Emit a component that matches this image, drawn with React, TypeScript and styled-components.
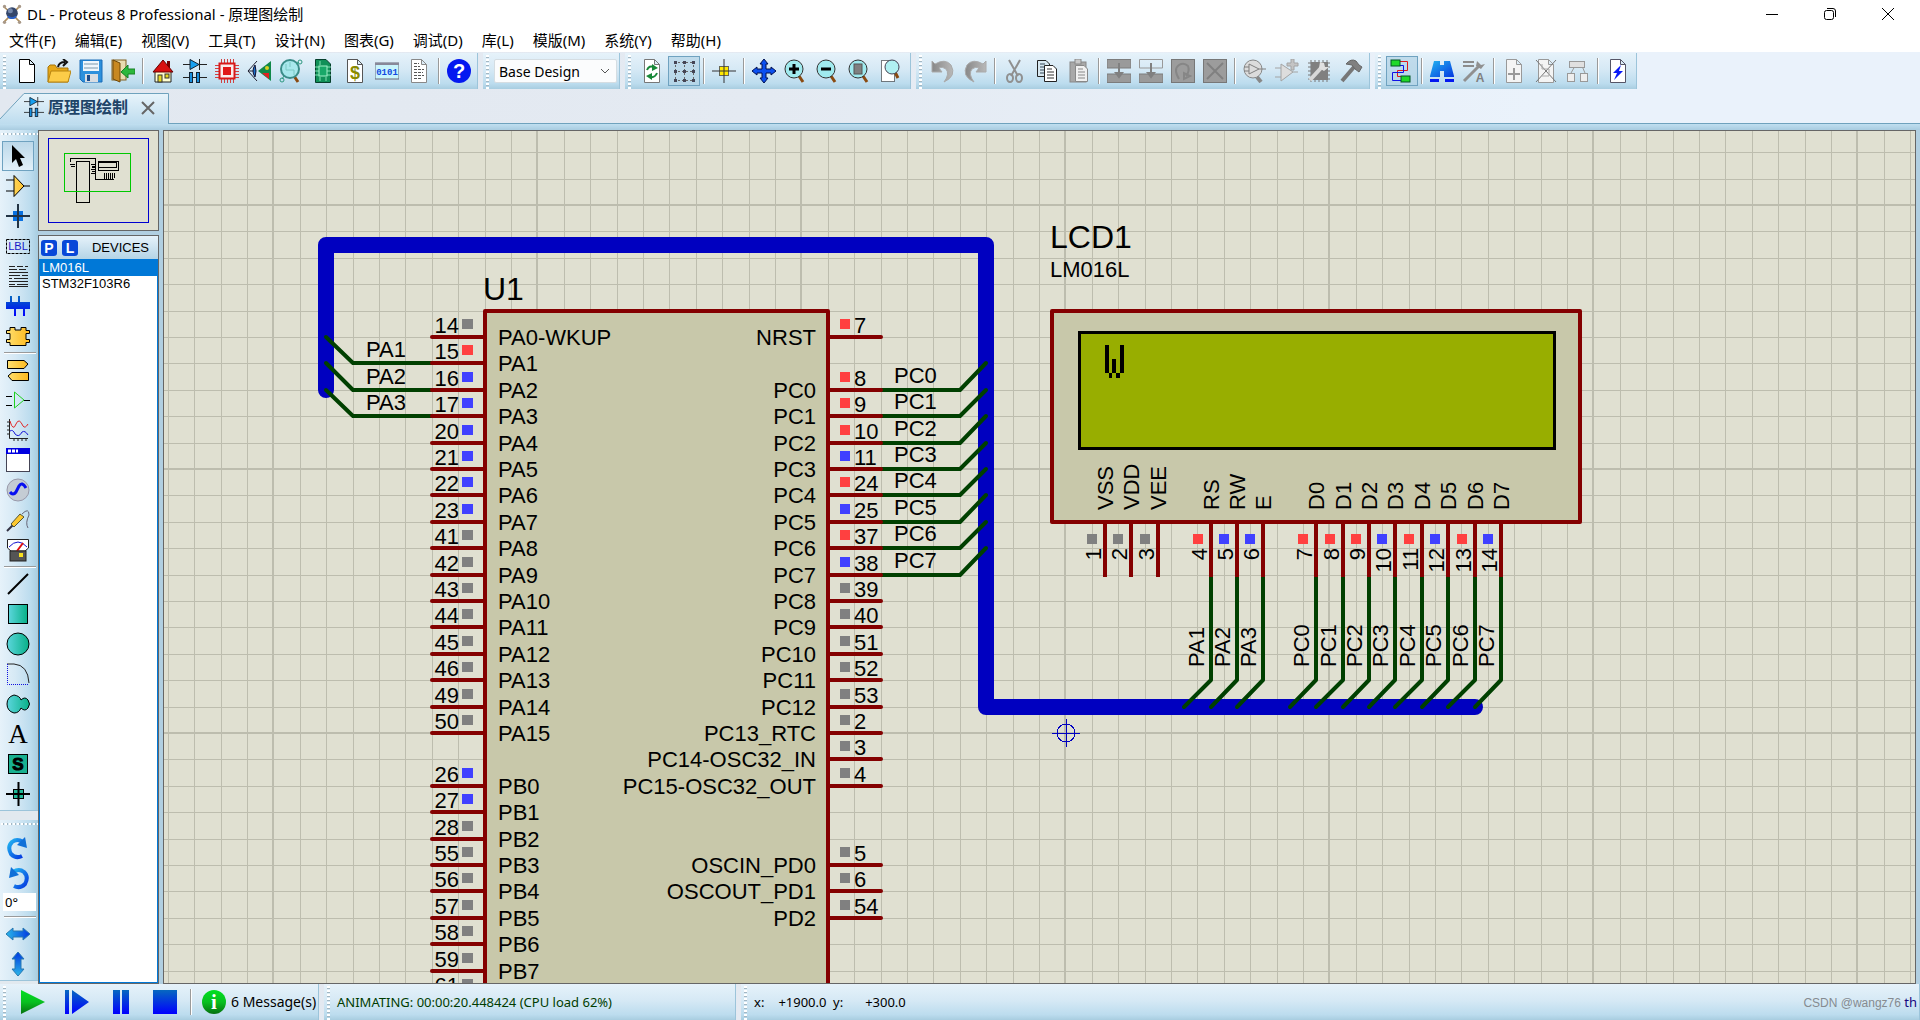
import React from "react";
import styled, { createGlobalStyle } from "styled-components";

const UI_FONT = `"Noto Sans", "Noto Sans CJK SC", sans-serif`;
const DRAW_FONT = `"Liberation Sans", Arial, sans-serif`;

const GlobalStyle = createGlobalStyle`
  * { box-sizing: border-box; }
  body { margin: 0; font-family: ${UI_FONT}; font-size: 14px; color: #000; }
  button { border: 0; padding: 0; margin: 0; background: none; color: inherit; font: inherit; }
  svg { display: block; }
`;

/* ---------- window frame ---------- */

const Window = styled.div`
  display: flex;
  flex-direction: column;
  height: 100vh;
  overflow: hidden;
  background: linear-gradient(to right, #e2e8f0, #e4eaf2 40%, #eaf2fb 80%);
`;

const TitleBar = styled.header`
  display: flex;
  align-items: center;
  height: 28px;
  padding-left: 2px;
  gap: 5px;
  background: #fff;
`;

const Title = styled.h1`
  flex: 1;
  margin: 0;
  font-size: 15px;
  font-weight: 400;
  line-height: 20px;
  white-space: nowrap;
`;

const WindowButton = styled.button`
  display: flex;
  align-items: center;
  justify-content: center;
  width: 58px;
  height: 28px;
`;

const WindowButtons = styled.div`
  display: flex;
  padding-right: 3px;
`;

const MenuBar = styled.nav`
  display: flex;
  align-items: center;
  gap: 19px;
  height: 24px;
  padding-left: 9px;
  background: #fff;
`;

const MenuItem = styled.button`
  font-size: 15px;
  line-height: 20px;
  white-space: nowrap;
`;

/* ---------- toolbars ---------- */

const ToolbarRow = styled.div`
  display: flex;
  gap: 5px;
  height: 37px;
  padding-top: 1px;
`;

const Toolbar = styled.div`
  display: flex;
  align-items: center;
  padding-right: 2px;
  border-right: 1px solid #9cc4da;
  background: linear-gradient(#e6f2fa, #d6e9f5 45%, #bcdcee 85%, #a8cde0);
`;

const Grip = styled.span<{ $row?: boolean }>`
  flex: none;
  ${(p) =>
    p.$row
      ? `align-self: stretch; height: 2px; margin: 0 0 0 1px;
         background: repeating-linear-gradient(to right, #fff 0 2px, #a3b7c3 2px 3px, transparent 3px 4px);`
      : `align-self: stretch; width: 3px; margin: 2px 5px 0 3px;
         background: repeating-linear-gradient(to bottom, #fff 0 2px, #a3b7c3 2px 3px, transparent 3px 4px);`}
`;

const ToolButton = styled.button<{ $on?: boolean }>`
  display: flex;
  align-items: center;
  justify-content: center;
  width: 32px;
  height: 30px;
  border: 1px solid ${(p) => (p.$on ? "#6fa2c0" : "transparent")};
  background: ${(p) => (p.$on ? "rgba(178, 211, 230, 0.7)" : "none")};
`;

const Divider = styled.span<{ $row?: boolean }>`
  flex: none;
  ${(p) =>
    p.$row
      ? `height: 2px; margin: 1px 2px 1px 4px; background: linear-gradient(#9a9a9a 50%, #fff 50%); align-self: stretch;`
      : `width: 2px; height: 26px; margin: 0 3px; background: linear-gradient(to right, #9a9a9a 50%, #fff 50%);`}
`;

const VariantBox = styled.div`
  position: relative;
  display: flex;
  align-items: center;
`;

const VariantSelect = styled.select`
  width: 123px;
  height: 24px;
  padding: 0 24px 0 4px;
  border: 1px solid #d5dde2;
  border-radius: 2px;
  background: #fbfcfd;
  appearance: none;
  color: #000;
  font-family: ${UI_FONT};
  font-size: 14px;
`;

const Chevron = styled.svg`
  position: absolute;
  right: 7px;
  pointer-events: none;
`;

/* ---------- tab strip ---------- */

const TabStrip = styled.div`
  display: flex;
  height: 35px;
  padding-top: 4px;
`;

const Tab = styled.div`
  position: relative;
  display: flex;
  align-items: center;
  width: 169px;
  height: 31px;
  padding: 0 0 3px 24px;
`;

const TabShape = styled.svg`
  position: absolute;
  inset: 0;
`;

const TabTitle = styled.button`
  position: relative;
  display: flex;
  align-items: center;
  gap: 4px;
  color: #1e4468;
  font-size: 16px;
  font-weight: 700;
  line-height: 20px;
`;

const TabClose = styled.button`
  position: relative;
  margin: 2px 0 0 12px;
`;

const TabRule = styled.div`
  flex: 1;
  border-bottom: 1px solid #6fa2bd;
`;

const Band = styled.div`
  height: 6px;
  background: linear-gradient(#c0dff0, #a9cce0);
`;

/* ---------- workspace ---------- */

const Workspace = styled.main`
  display: flex;
  flex: 1;
  min-height: 0;
  padding-right: 4px;
  background: #b1cfe1;
`;

const Palette = styled.div`
  display: flex;
  flex-direction: column;
  gap: 9px;
  width: 38px;
  background: #e2e9ef;
`;

const PaletteGroup = styled.div<{ $gap: number }>`
  display: flex;
  flex-direction: column;
  border-bottom: 1px solid #9cc4da;
  padding: 3px 0 1px;
  background: linear-gradient(to right, #e6f2fa, #d6e9f5 40%, #bcdcee 80%, #a8cde0);

  & > ${Grip} { margin-bottom: ${(p) => p.$gap}px; }
`;

const PaletteButton = styled.button<{ $on?: boolean }>`
  display: flex;
  align-items: center;
  justify-content: center;
  width: 32px;
  height: 30px;
  margin-left: 2px;
  border: 1px solid ${(p) => (p.$on ? "#6fa2c0" : "transparent")};
  background: ${(p) => (p.$on ? "linear-gradient(#bcd8e9, #e2f0f9)" : "none")};
`;

const AngleInput = styled.input`
  width: 33px;
  height: 18px;
  margin: 0 0 4px 3px;
  padding: 0 2px;
  border: 0;
  background: #fff;
  color: #000;
  font-family: ${UI_FONT};
  font-size: 13px;
`;

const SidePanel = styled.aside`
  display: flex;
  flex-direction: column;
  gap: 4px;
  width: 121px;
`;

const Overview = styled.div`
  height: 101px;
  border: 1px solid #666;
  background: #e0e0d1;
`;

const DeviceBox = styled.section`
  display: flex;
  flex: 1;
  flex-direction: column;
  border: 1px solid #666;
  background: #fff;
`;

const DeviceHeader = styled.div`
  display: flex;
  align-items: center;
  height: 23px;
  padding: 0 9px 0 2px;
  background: linear-gradient(#e6f2fa, #b4d4e6);
`;

const PickButton = styled.button`
  width: 16px;
  height: 16px;
  margin-right: 5px;
  border-radius: 3px;
  background: #0848d8;
  color: #fff;
  font-family: ${DRAW_FONT};
  font-size: 14px;
  font-weight: 700;
  line-height: 16px;
`;

const DeviceTitle = styled.h2`
  flex: 1;
  margin: 0;
  font-family: ${DRAW_FONT};
  font-size: 13px;
  font-weight: 400;
  line-height: 16px;
  text-align: right;
`;

const DeviceList = styled.ul`
  flex: 1;
  margin: 0;
  padding: 0;
  border: 1px solid #0078d7;
  list-style: none;
`;

const DeviceItem = styled.li<{ $on?: boolean }>`
  padding-left: 2px;
  background: ${(p) => (p.$on ? "#0078d7" : "none")};
  color: ${(p) => (p.$on ? "#fff" : "#000")};
  font-family: ${DRAW_FONT};
  font-size: 13px;
  line-height: 16px;
`;

const SheetFrame = styled.div`
  flex: 1;
  min-width: 0;
  margin-left: 4px;
  border: 1px solid #666;
  background: #e0e0d1;
  overflow: hidden;
`;

const Sheet = styled.svg`
  width: 100%;
  height: 100%;
  font-family: ${DRAW_FONT};
  font-size: 22px;
`;

/* ---------- status bar ---------- */

const StatusBar = styled.footer`
  display: flex;
  gap: 5px;
  height: 36px;
`;

const StatusPart = styled.div<{ $basis?: number }>`
  display: flex;
  align-items: center;
  ${(p) => (p.$basis ? `width: ${p.$basis}px;` : "flex: 1;")}
  border-right: 1px solid #9cc4da;
  background: linear-gradient(#e6f2fa, #d6e9f5 45%, #bcdcee 85%, #a8cde0);
  font-size: 13px;
  line-height: 18px;
  white-space: nowrap;
`;

const RunButton = styled.button`
  display: flex;
  align-items: center;
  justify-content: center;
  width: 44px;
  height: 30px;
`;

const Messages = styled.button`
  display: flex;
  align-items: center;
  gap: 5px;
  margin-left: 7px;
  font-size: 14px;
`;

const Progress = styled.output`
  padding-left: 2px;
  color: #003c00;
`;

const Coordinate = styled.span<{ $gap: number }>`
  display: flex;
  gap: ${(p) => p.$gap}px;
  width: 79px;
  padding-left: 2px;
`;

const Credit = styled.span`
  margin-left: auto;
  padding-right: 2px;
  color: #858b90;
  font-family: ${DRAW_FONT};
  font-size: 12px;
`;

const CreditTail = styled.span`
  color: #16067e;
  font-family: ${UI_FONT};
  font-size: 13px;
`;

/* ---------- icons ---------- */

type Pic = React.ReactNode;
const Icon = ({ children, size = 24 }: { children: Pic; size?: number }) => (
  <svg width={size} height={size} viewBox="0 0 24 24" aria-hidden="true">
    {children}
  </svg>
);

const Gradients = () => (
  <svg width="0" height="0" style={{ position: "absolute" }} aria-hidden="true">
    <defs>
      <linearGradient id="gold" x1="0" x2="1"><stop offset="0" stopColor="#ffe070" /><stop offset="1" stopColor="#fcb81c" /></linearGradient>
      <linearGradient id="teal" x1="0" x2="1"><stop offset="0" stopColor="#5cd6dc" /><stop offset="1" stopColor="#08b088" /></linearGradient>
      <linearGradient id="azure" x1="0" x2="1" y1="0" y2="1"><stop offset="0" stopColor="#22b4f0" /><stop offset="1" stopColor="#0438e0" /></linearGradient>
      <linearGradient id="azureH" x1="0" x2="1"><stop offset="0" stopColor="#2cb8e8" /><stop offset="1" stopColor="#0038e0" /></linearGradient>
      <linearGradient id="azureV" x1="0" x2="0" y1="1" y2="0"><stop offset="0" stopColor="#2cb8e8" /><stop offset="1" stopColor="#0038e0" /></linearGradient>
      <linearGradient id="deep" x1="0" x2="0" y1="0" y2="1"><stop offset="0" stopColor="#0668c0" /><stop offset="1" stopColor="#0000ff" /></linearGradient>
      <linearGradient id="go" x1="0" x2="0" y1="0" y2="1"><stop offset="0" stopColor="#00e020" /><stop offset="0.5" stopColor="#08c020" /><stop offset="1" stopColor="#067010" /></linearGradient>
      <linearGradient id="ash" x1="0" x2="1"><stop offset="0" stopColor="#888" /><stop offset="1" stopColor="#b8b8b8" /></linearGradient>
      <linearGradient id="tabFill" x1="0" x2="0" y1="0" y2="1"><stop offset="0" stopColor="#e8f4fb" /><stop offset="1" stopColor="#bddcee" /></linearGradient>
    </defs>
  </svg>
);

const page = (stroke = "#444", fill = "#fff") => (
  <path d="M4.500.500H14.500L19.500 5.500V23.500H4.500ZM14.500.500V5.500H19.500" fill={fill} stroke={stroke} />
);
const lens = (
  <>
    <path d="M15 17l4 6" stroke="#8a4a10" strokeWidth="3" />
    <circle cx="10" cy="10" r="9" fill="#a0eaee" stroke="#333" />
  </>
);
const diodeCap = (
  <>
    <path d="M0 5.500H24M0 18.500H24M16.500 0V11" stroke="#222" />
    <path d="M7 0.500L16 5.500L7 10.500Z" fill="#18a0f0" stroke="#123" />
    <rect x="6.500" y="13.500" width="3" height="10" fill="#1890e0" stroke="#123" />
    <rect x="13.500" y="13.500" width="3" height="10" fill="#1890e0" stroke="#123" />
  </>
);

const pics: Record<string, Pic> = {
  logo: (
    <>
      <path d="M2 3Q12 12 22 22M22 2Q12 12 2 22" stroke="#b09060" strokeWidth="2" fill="none" />
      <circle cx="12" cy="11" r="7" fill="#34466a" />
      <circle cx="10" cy="8" r="3" fill="#7488ac" />
      <path d="M7 15Q12 19 17 15" stroke="#2a60c8" strokeWidth="2" fill="none" />
      <circle cx="3" cy="3" r="2" fill="#a89888" /><circle cx="21" cy="3" r="2" fill="#a89888" />
      <circle cx="3" cy="22" r="2" fill="#a89888" /><circle cx="21" cy="22" r="2" fill="#a89888" />
    </>
  ),
  fresh: page("#000"),
  open: (
    <>
      <path d="M1 23V8L3 6H8L10 9H21V23Z" fill="#e6a818" stroke="#a87408" />
      <path d="M1 23L4 12H24L21 23Z" fill="#fccc48" stroke="#b88410" />
      <path d="M11 8Q12 3 18 3M16 0L20 3L16 7" fill="none" stroke="#111" strokeWidth="2" />
    </>
  ),
  save: (
    <>
      <path d="M1 1H23V23H4L1 20Z" fill="#2c90dc" stroke="#1a6cb8" />
      <rect x="4" y="2" width="16" height="10" fill="#eef6fc" />
      <path d="M5 5H19M5 9H19" stroke="#7a98ac" />
      <rect x="6" y="15" width="13" height="8" fill="#d8dde2" /><rect x="8" y="16" width="3" height="6" fill="#1c4c8c" />
    </>
  ),
  exit: (
    <>
      <rect x="1" y="1" width="14" height="20" fill="#e8dcb0" stroke="#806020" />
      <path d="M2 1L9 4V23L2 20Z" fill="#c88820" stroke="#704808" />
      <path d="M10 13L17 6V10H24V15H17V19Z" fill="#2cb83c" stroke="#188024" />
    </>
  ),
  home: (
    <>
      <path d="M16 2H19V9H16Z" fill="#700" />
      <path d="M4 11H20V23H4Z" fill="#ffffd0" stroke="#222" />
      <path d="M2 13L12 1L22 13Z" fill="#d81010" stroke="#600" />
      <rect x="7" y="16" width="4" height="7" fill="#e8d820" stroke="#333" /><rect x="14" y="15" width="4" height="4" fill="#e8d820" stroke="#333" />
    </>
  ),
  schematic: diodeCap,
  chip: (
    <>
      <path d="M6.500 0V24M9.500 0V24M12.500 0V24M15.500 0V24M18.500 0V24M0 6.500H24M0 9.500H24M0 12.500H24M0 15.500H24M0 18.500H24" stroke="#d04040" />
      <rect x="4.500" y="4.500" width="15" height="15" fill="#fbecec" stroke="#d81818" strokeWidth="2" /><rect x="8" y="8" width="8" height="8" fill="#e01818" />
    </>
  ),
  viewer: (
    <>
      <path d="M10 2L1 12L10 22M1 12H9" fill="none" stroke="#223" />
      <path d="M8 6Q4 12 8 18Q10 12 8 6" fill="#1c70c8" stroke="#113" />
      <path d="M11 12L24 2V22Z" fill="#108848" /><path d="M15 14L22 20V14Z" fill="#e02020" /><circle cx="20" cy="9" r="2" fill="#d8d020" />
    </>
  ),
  gerber: (
    <>
      <path d="M15 17L19 23" stroke="#8a4a10" strokeWidth="3" />
      <circle cx="11" cy="10" r="9" fill="#a8e8ec" stroke="#3a8c88" strokeWidth="2" />
      <path d="M7 5V11H15V16M11 3V8" stroke="#7cc8c4" fill="none" />
      <path d="M17 5L20 3M5 17L3 20" stroke="#2c9880" fill="none" />
      <circle cx="21" cy="3" r="2" fill="none" stroke="#2c9880" /><circle cx="3" cy="21" r="2" fill="none" stroke="#2c9880" />
    </>
  ),
  board: (
    <>
      <path d="M4.500.500H15L19.500 5V23.500H4.500Z" fill="#109058" stroke="#06402c" />
      <path d="M4 8H8M4 12H8M4 16H8M16 8H20M16 12H20M16 16H20M9 6V2M15 18V22M9 18V22" stroke="#80e0b0" />
      <rect x="8" y="7" width="8" height="10" fill="#18a868" stroke="#a0f0c8" />
    </>
  ),
  bill: (
    <>
      {page("#555")}
      <text x="12" y="20" textAnchor="middle" fontSize="18" fontWeight="700" fill="#8a8a00" fontFamily="Liberation Sans, sans-serif">$</text>
    </>
  ),
  source: (
    <>
      <rect x="0" y="4" width="24" height="16" fill="#c8f4fc" stroke="#667" />
      <path d="M0 5H24" stroke="#889" strokeWidth="2" />
      <text x="12" y="16" textAnchor="middle" fontSize="9" fontWeight="700" fill="#1048e0" fontFamily="Liberation Mono, monospace">0101</text>
    </>
  ),
  notes: (
    <>
      {page("#888")}
      <path d="M7 4.500H12M7 7.500H13M7 10.500H17M7 13.500H16M7 16.500H17M7 19.500H14" stroke="#555" strokeDasharray="3 1" />
    </>
  ),
  help: (
    <>
      <circle cx="12" cy="12" r="12" fill="#0418f0" />
      <text x="12" y="19" textAnchor="middle" fontSize="20" fontWeight="700" fill="#fff" fontFamily="Liberation Sans, sans-serif">?</text>
    </>
  ),
  redraw: (
    <>
      {page("#777")}
      <path d="M7 11Q9 6 14 8" fill="none" stroke="#188838" strokeWidth="2" /><path d="M12 5L18 9L12 12Z" fill="#188838" />
      <path d="M17 14Q15 19 10 18" fill="none" stroke="#188838" strokeWidth="2" /><path d="M12 14L6 17L12 21Z" fill="#188838" />
    </>
  ),
  dots: (
    <>
      <path d="M2 3.500H22M2 12.500H22M2 21.500H22M3.500 2V22M12.500 2V22M21.500 2V22" stroke="#666" strokeDasharray="2 2" />
      {[3, 12, 21].map((x) => [3, 12, 21].map((y) => <rect key={`${x}-${y}`} x={x - 1} y={y - 1} width="3" height="3" fill="#445" />))}
    </>
  ),
  origin: (
    <>
      <rect x="7.500" y="7.500" width="9" height="9" fill="#ffe800" stroke="#665" />
      <path d="M0 12H24M12 0V24" stroke="#333" />
    </>
  ),
  pan: (
    <path d="M12 0L16 5H14V10H19V8L24 12L19 16V14H14V19H16L12 24L8 19H10V14H5V16L0 12L5 8V10H10V5H8Z" fill="#0c50f0" stroke="#001050" />
  ),
  zoomIn: <>{lens}<path d="M10 5V15M5 10H15" stroke="#000" strokeWidth="3" /></>,
  zoomOut: <>{lens}<path d="M5 10H15" stroke="#000" strokeWidth="3" /></>,
  zoomAll: <>{lens}<rect x="6" y="5" width="8" height="10" fill="#808080" stroke="#555" /></>,
  zoomArea: (
    <>
      <path d="M1.500 1.500H14.500V22.500H1.500Z" fill="#fff" stroke="#000" strokeDasharray="1 1" />
      <path d="M15 13L18 19" stroke="#8a4a10" strokeWidth="3" /><circle cx="12" cy="8" r="7" fill="#b0f0f2" stroke="#445" />
    </>
  ),
  undo: <path d="M1 2L4 5Q14 -1 20 6Q26 17 13 23Q19 15 15 10Q11 7 8 9L11 13L1 13Z" fill="url(#ash)" stroke="#aaa" />,
  redo: <path d="M23 2L20 5Q10 -1 4 6Q-2 17 11 23Q5 15 9 10Q13 7 16 9L13 13L23 13Z" fill="url(#ash)" stroke="#aaa" />,
  cut: (
    <>
      <path d="M6 1L15 17M17 1L8 17" stroke="#909090" strokeWidth="2" />
      <ellipse cx="7" cy="19" rx="3" ry="4" fill="none" stroke="#909090" strokeWidth="2" /><ellipse cx="16" cy="19" rx="3" ry="4" fill="none" stroke="#909090" strokeWidth="2" />
    </>
  ),
  copy: (
    <>
      <path d="M2.500 1.500H11L14.500 5V17.500H2.500Z" fill="#d8e8f0" stroke="#222" /><path d="M5 5H10M5 8H12M5 11H12M5 14H12" stroke="#345" />
      <path d="M9.500 6.500H18L21.500 10V22.500H9.500Z" fill="#fff" stroke="#222" /><path d="M12 10H17M12 13H19M12 16H19M12 19H19" stroke="#333" />
    </>
  ),
  paste: (
    <>
      <rect x="3" y="3" width="16" height="20" fill="#a8a8a8" stroke="#888" /><rect x="8" y="0" width="6" height="5" fill="#c8c8c8" stroke="#888" />
      <path d="M8.500 6.500H17L20.500 10V22.500H8.500Z" fill="#f0f0f0" stroke="#888" /><path d="M11 10H16M11 13H18M11 16H18M11 19H18" stroke="#888" />
    </>
  ),
  blockCopy: (
    <>
      <path d="M0 .500H24V9H0ZM0 15H24V23.500H0Z" fill="#9a9a9a" stroke="#7c7c7c" />
      <path d="M12 4V16M9 14L12 18L15 14Z" fill="#808080" stroke="#808080" strokeWidth="2" />
    </>
  ),
  blockMove: (
    <>
      <path d="M.500.500H23.500V9H.500Z" fill="none" stroke="#999" /><path d="M0 15H24V23.500H0Z" fill="#9a9a9a" stroke="#7c7c7c" />
      <path d="M12 4V16M9 14L12 18L15 14Z" fill="#808080" stroke="#808080" strokeWidth="2" />
    </>
  ),
  blockRotate: (
    <>
      <rect x=".500" y=".500" width="23" height="23" fill="#9c9c9c" stroke="#777" />
      <path d="M8 20Q2 10 8 6Q13 3 17 7Q19 12 15 17M13 14V20L19 17Z" fill="none" stroke="#868686" strokeWidth="2" />
    </>
  ),
  blockDelete: (
    <>
      <rect x=".500" y=".500" width="23" height="23" fill="#9c9c9c" stroke="#777" />
      <path d="M4 4L20 20M20 4L4 20" stroke="#808080" strokeWidth="2" />
    </>
  ),
  pick: (
    <>
      <path d="M14 18L18 23" stroke="#888" strokeWidth="4" />
      <circle cx="10" cy="10" r="9" fill="#dcdcdc" stroke="#888" /><path d="M6 5L16 10L6 15ZM1 8H6M1 12H6M16 10H23" fill="none" stroke="#808080" />
    </>
  ),
  makeDevice: (
    <>
      <path d="M6 5L18 13L6 22ZM0 9H6M0 18H6M18 13H23" fill="#ddd" stroke="#a4a4a4" />
      <path d="M16 0H19V4H23V7H19V11H16V7H12V4H16Z" fill="#c4c4c4" stroke="#a4a4a4" />
    </>
  ),
  packaging: (
    <>
      <path d="M4 1V23M8 1V23M12 1V23M16 1V23M20 1V23M1 4H23M1 8H23M1 12H23M1 16H23M1 20H23" stroke="#777" />
      <rect x="4" y="3" width="17" height="18" fill="#808080" /><path d="M3 21L14 9" stroke="#d8d8d8" strokeWidth="4" /><path d="M13 3L12 9L17 12L22 8L18 8L17 4Z" fill="#e0e0e0" />
    </>
  ),
  decompose: (
    <>
      <path d="M3 22L15 8" stroke="#777" strokeWidth="4" /><path d="M7 5Q12 -1 17 2L20 6L23 8L20 13L16 10L13 6Z" fill="#808080" stroke="#666" />
    </>
  ),
  wireAuto: (
    <>
      <path d="M10 2.500H17.500V11.500H7.500V17.500H12" fill="none" stroke="#e01818" /><path d="M10 6.500H13.500V13.500H2.500V21.500H12" fill="none" stroke="#1010e8" />
      <rect x="1" y="1" width="9" height="6" fill="#20d828" stroke="#052" /><rect x="11" y="17" width="9" height="6" fill="#20d828" stroke="#052" />
    </>
  ),
  find: (
    <>
      <path d="M4 2H10V6H14V2H20L24 17V18H14V12H10V18H0V17Z" fill="url(#azure)" />
      <path d="M0 20H9V23H0ZM15 20H24V23H15Z" fill="#0418f0" />
    </>
  ),
  assign: (
    <>
      <path d="M1 3H12M1 7H12" stroke="#8c8c8c" strokeWidth="2" /><path d="M2 22L18 6" stroke="#909090" strokeWidth="3" /><path d="M15 2L14 7L19 10L23 5L19 6Z" fill="#909090" />
      <text x="18" y="23" textAnchor="middle" fontSize="12" fontWeight="700" fill="#808080" fontFamily="Liberation Sans, sans-serif">A</text>
    </>
  ),
  sheetNew: <>{page("#999", "#f4f4f4")}<path d="M12 9V21M6 15H18" stroke="#999" strokeWidth="2" /></>,
  sheetDrop: <>{page("#999", "#f4f4f4")}<path d="M2 1L22 23M22 1L2 23" stroke="#777" /><path d="M8 5V10H15V17H8" stroke="#aaa" fill="none" /></>,
  sheetTree: (
    <>
      <path d="M5 14L9 7M19 14L16 7" stroke="#999" />
      <rect x="3.500" y="2.500" width="15" height="6" fill="#e0e0e0" stroke="#999" /><rect x="1.500" y="14.500" width="7" height="8" fill="#eee" stroke="#999" /><rect x="14.500" y="14.500" width="7" height="8" fill="#eee" stroke="#999" />
    </>
  ),
  erc: <>{page("#556")}<path d="M15 6L7 14H11L8 21L17 12H13Z" fill="#0818f8" /></>,

  arrow: <path d="M6 1V19L10 15L13 23L17 21L14 14H19Z" fill="#000" />,
  component: <path d="M0 6H8M0 17H8M18 12H24M8 1.500V22.500L18 12Z" fill="url(#gold)" stroke="#000" />,
  junction: <><rect x="7" y="7" width="10" height="10" fill="#0870e0" /><path d="M12 0V24M0 12H24" stroke="#234" strokeWidth="2" /></>,
  label: (
    <>
      <rect x=".500" y="5.500" width="23" height="14" fill="none" stroke="#000" strokeDasharray="3 1" />
      <text x="12" y="16" textAnchor="middle" fontSize="11" fill="#1818c8" fontFamily="Liberation Sans, sans-serif">LBL</text>
    </>
  ),
  script: (
    <>
      <path d="M3 2.500H9M11 2.500H17M19 2.500H22M3 8.500H22M3 11.500H14M16 11.500H22M3 14.500H6M8 14.500H22" stroke="#222" />
      <path d="M3 17.500H22M3 20.500H9M11 20.500H22M3 5.500H11M13 5.500H20M3 22.500H22" stroke="#222" />
    </>
  ),
  bus: <path d="M0 8H4V2H6V8H12V2H14V8H24V15H19V22H17V15H10V22H8V15H0Z" fill="url(#deep)" />,
  subcircuit: <path d="M4 3.500H9V6H15V3.500H20V6.500H23.500V9.500H20V15.500H23.500V18.500H20V21.500H4V18.500H.500V15.500H4V9.500H.500V6.500H4Z" fill="url(#gold)" stroke="#000" />,
  terminal: <path d="M1.500 2.500H18L22 6L18 10.500H1.500ZM22.500 14.500H6L2 18L6 22.500H22.500Z" fill="url(#gold)" stroke="#000" />,
  devicePin: <><path d="M0 8.500H6M0 17.500H6M18 12.500H24" stroke="#000" /><path d="M8.500 4V20L18 12Z" fill="none" stroke="#20d020" /></>,
  graph: (
    <>
      <path d="M3.500 1V20.500H22M1 4H4M1 8H4M1 12H4M1 16H4M8 20V23M12 20V23M16 20V23M20 20V23" stroke="#222" fill="none" />
      <path d="M4 3Q7 14 10 6Q13 -1 17 8Q19 11 22 6" stroke="#e02828" fill="none" /><path d="M4 13Q7 11 9 16Q13 20 16 14Q19 12 22 17" stroke="#1818d8" fill="none" />
    </>
  ),
  popup: <><rect x=".500" y=".500" width="23" height="23" fill="#fff" stroke="#445" /><rect x="0" y="0" width="24" height="6" fill="#0000e0" /><path d="M2 3H12" stroke="#fff" strokeWidth="3" strokeDasharray="3 1" /></>,
  generator: <><circle cx="12" cy="12" r="11" fill="#c4ccd4" stroke="#99a" /><path d="M4 14Q7 18 10 14L13 8Q16 3 20 10" fill="none" stroke="#0810f0" strokeWidth="3" /></>,
  probe: <><path d="M1 23L7 17" stroke="#334" strokeWidth="2" /><path d="M5 16L14 6L18 9L8 19Z" fill="#fcc830" stroke="#553" /><path d="M16 6Q23 -1 23 7Q19 15 22 20" fill="none" stroke="#667" /></>,
  meter: (
    <>
      <path d="M1.500 1.500H22.500V10L19 13H5L1.500 10Z" fill="#fff" stroke="#222" /><path d="M3 9Q12 -1 21 9" stroke="#1010d0" fill="none" /><path d="M11 13L17 5" stroke="#e01010" strokeWidth="2" />
      <rect x="4" y="13" width="16" height="10" fill="#555" stroke="#222" /><rect x="13" y="15" width="4" height="4" fill="#f8e020" />
    </>
  ),
  line: <path d="M2 22L22 2" stroke="#000" strokeWidth="2" />,
  box: <rect x="2.500" y="2.500" width="19" height="19" fill="url(#teal)" stroke="#000" />,
  circle: <circle cx="12" cy="12" r="11" fill="url(#teal)" stroke="#000" />,
  arc: <><path d="M1 2H8Q22 3 23 21" fill="none" stroke="#222" /><path d="M1.500 2V22.500H23" fill="none" stroke="#1010e0" strokeDasharray="1 1" /></>,
  path: <path d="M8 3Q14 4 15 8Q19 4 22 8Q25 12 22 16Q19 20 15 16Q13 21 8 21Q1 19 1 12Q1 5 8 3Z" fill="url(#teal)" stroke="#000" />,
  text: <text x="12" y="21" textAnchor="middle" fontSize="27" fill="#000" fontFamily="Liberation Serif, serif">A</text>,
  symbol: (
    <>
      <rect x="2.500" y="2.500" width="19" height="19" fill="#18b090" stroke="#000" />
      <text x="12" y="18" textAnchor="middle" fontSize="17" fontWeight="700" stroke="#000" fill="#000" fontFamily="Liberation Sans, sans-serif">S</text>
    </>
  ),
  marker: <><rect x="7.500" y="7.500" width="10" height="9" fill="#20b898" stroke="#000" /><path d="M12.500 0V24M0 12H24" stroke="#000" strokeWidth="2" /></>,
  rotateCw: <><path d="M16 20Q10 23 5 18Q1 11 6 6Q11 2 17 6" fill="none" stroke="url(#azure)" strokeWidth="4" /><path d="M19 1L21 12L11 9Z" fill="#1070d8" /></>,
  rotateCcw: <><path d="M8 20Q14 23 19 18Q23 11 18 6Q13 2 7 6" fill="none" stroke="url(#azure)" strokeWidth="4" /><path d="M5 1L3 12L13 9Z" fill="#1070d8" /></>,
  flipX: <path d="M0 12L7 6V9H17V6L24 12L17 18V15H7V18Z" fill="url(#azureH)" stroke="#2878b0" />,
  flipY: <path d="M12 0L18 7H15V17H18L12 24L6 17H9V7H6Z" fill="url(#azureV)" stroke="#2878b0" />,
  play: <path d="M0 0L24 12L0 24Z" fill="url(#go)" />,
  step: <path d="M0 0H4V24H0ZM7 0L24 12L7 24Z" fill="url(#deep)" />,
  pause: <path d="M4 0H11V24H4ZM13 0H20V24H13Z" fill="url(#deep)" />,
  stop: <rect width="24" height="24" fill="url(#deep)" />,
  info: (
    <>
      <circle cx="12" cy="12" r="12" fill="url(#go)" />
      <text x="12" y="19" textAnchor="middle" fontSize="21" fontWeight="700" fill="#fff" fontFamily="Liberation Serif, serif">i</text>
    </>
  ),
};

/* ---------- schematic ---------- */

// One grid square is 132/5 px; positions snap to whole pixels.
const gx = (n: number) => Math.ceil((n * 132) / 5);
const gy = (n: number) => Math.round((n * 132) / 5);

const range = (from: number, to: number) => Array.from({ length: to - from + 1 }, (_, i) => from + i);

const BODY = "#c8c8aa";
const OUTLINE = "#840000";
const WIRE = "#004000";
const BUS = "#0000c0";
const LEVEL: Record<string, string> = { r: "#ff4040", b: "#4040ff", g: "#808080" };

type Pin = [row: number, num: string, level: string, name: string];

const leftPins: Pin[] = [
  [-15, "14", "g", "PA0-WKUP"], [-14, "15", "r", "PA1"], [-13, "16", "b", "PA2"], [-12, "17", "b", "PA3"],
  [-11, "20", "b", "PA4"], [-10, "21", "b", "PA5"], [-9, "22", "b", "PA6"], [-8, "23", "b", "PA7"],
  [-7, "41", "g", "PA8"], [-6, "42", "g", "PA9"], [-5, "43", "g", "PA10"], [-4, "44", "g", "PA11"],
  [-3, "45", "g", "PA12"], [-2, "46", "g", "PA13"], [-1, "49", "g", "PA14"], [0, "50", "g", "PA15"],
  [2, "26", "b", "PB0"], [3, "27", "b", "PB1"], [4, "28", "g", "PB2"], [5, "55", "g", "PB3"],
  [6, "56", "g", "PB4"], [7, "57", "g", "PB5"], [8, "58", "g", "PB6"], [9, "59", "g", "PB7"], [10, "61", "g", ""],
];

const rightPins: Pin[] = [
  [-15, "7", "r", "NRST"], [-13, "8", "r", "PC0"], [-12, "9", "r", "PC1"], [-11, "10", "r", "PC2"],
  [-10, "11", "b", "PC3"], [-9, "24", "r", "PC4"], [-8, "25", "b", "PC5"], [-7, "37", "r", "PC6"],
  [-6, "38", "b", "PC7"], [-5, "39", "g", "PC8"], [-4, "40", "g", "PC9"], [-3, "51", "g", "PC10"],
  [-2, "52", "g", "PC11"], [-1, "53", "g", "PC12"], [0, "2", "g", "PC13_RTC"], [1, "3", "g", "PC14-OSC32_IN"],
  [2, "4", "g", "PC15-OSC32_OUT"], [5, "5", "g", "OSCIN_PD0"], [6, "6", "g", "OSCOUT_PD1"], [7, "54", "g", "PD2"],
];

type LcdPin = [col: number, num: string, level: string, name: string, net?: string];

const lcdPins: LcdPin[] = [
  [1.5, "1", "g", "VSS"], [2.5, "2", "g", "VDD"], [3.5, "3", "g", "VEE"],
  [5.5, "4", "r", "RS", "PA1"], [6.5, "5", "b", "RW", "PA2"], [7.5, "6", "b", "E", "PA3"],
  [9.5, "7", "r", "D0", "PC0"], [10.5, "8", "r", "D1", "PC1"], [11.5, "9", "r", "D2", "PC2"], [12.5, "10", "b", "D3", "PC3"],
  [13.5, "11", "r", "D4", "PC4"], [14.5, "12", "b", "D5", "PC5"], [15.5, "13", "r", "D6", "PC6"], [16.5, "14", "b", "D7", "PC7"],
];

const Grid = () => (
  <g fill="#bdbdae">
    {range(-34, 110).map((n) => (
      <rect key={`v${n}`} x={n % 10 ? gx(n) : gx(n) - 1} y={-602} width={n % 10 ? 1 : 2} height={2400} />
    ))}
    {range(-22, 60).map((n) => (
      <rect key={`h${n}`} x={-901} y={n % 10 ? gy(n) : gy(n) - 1} width={4000} height={n % 10 ? 1 : 2} />
    ))}
  </g>
);

const UpText = ({ x, y, end, children }: { x: number; y: number; end?: boolean; children: string }) => (
  <text transform={`translate(${x} ${y}) rotate(-90)`} textAnchor={end ? "end" : "start"}>{children}</text>
);

const Controller = () => {
  const left = gx(-22);
  const right = gx(-9);
  return (
    <g>
      <rect x={left} y={gy(-16)} width={right - left} height={gy(14) - gy(-16)} fill={BODY} stroke={OUTLINE} strokeWidth="4" strokeLinejoin="round" />
      <text x={left - 2} y={gy(-16) - 11} fontSize="32">U1</text>
      {leftPins.map(([row, num, level, name]) => (
        <g key={num}>
          <path d={`M${gx(-24)} ${gy(row)}H${left}`} stroke={OUTLINE} strokeWidth="4" strokeLinecap="round" />
          <rect x={left - 23} y={gy(row) - 18} width="11" height="10" fill={LEVEL[level]} />
          <text x={left - 26} y={gy(row) - 4} textAnchor="end">{num}</text>
          {name && <text x={left + 13} y={gy(row) + 8}>{name}</text>}
        </g>
      ))}
      {rightPins.map(([row, num, level, name]) => (
        <g key={num}>
          <path d={`M${gx(-7)} ${gy(row)}H${right}`} stroke={OUTLINE} strokeWidth="4" strokeLinecap="round" />
          <rect x={right + 12} y={gy(row) - 18} width="10" height="10" fill={LEVEL[level]} />
          <text x={right + 26} y={gy(row) - 4}>{num}</text>
          <text x={right - 12} y={gy(row) + 8} textAnchor="end">{name}</text>
        </g>
      ))}
    </g>
  );
};

const Display = () => {
  const left = gx(-0.5);
  const top = gy(-16);
  const bottom = gy(-8);
  // Lit dots of the 5x7 character cell, as [x, y, width, height].
  const dots = [[0, 0, 4, 28], [15, 0, 4, 28], [7, 14, 4, 14], [4, 28, 3, 5], [11, 28, 4, 5]];
  return (
    <g>
      <rect x={left} y={top} width={gx(19.5) - left} height={bottom - top} fill={BODY} stroke={OUTLINE} strokeWidth="4" strokeLinejoin="round" />
      <rect x={left + 26} y={top + 20} width="478" height="119" fill="#000" />
      <rect x={left + 29} y={top + 23} width="472" height="113" fill="#98ae00" />
      <g transform={`translate(${left + 53} ${top + 34})`}>
        {dots.map(([x, y, w, h]) => <rect key={`${x}-${y}`} x={x} y={y} width={w} height={h} />)}
      </g>
      <text x={left - 2} y={top - 63} fontSize="32">LCD1</text>
      <text x={left - 2} y={top - 34}>LM016L</text>
      {lcdPins.map(([col, num, level, name, net]) => {
        const x = gx(col);
        return (
          <g key={num}>
            {net && (
              <path d={`M${x} ${gy(-6)}V${gy(-2)}L${gx(col - 1)} ${gy(-1)}`} fill="none" stroke={WIRE} strokeWidth="4" strokeLinecap="round" strokeLinejoin="round" />
            )}
            <path d={`M${x} ${bottom}V${gy(-6) + 2}`} stroke={OUTLINE} strokeWidth="4" />
            <rect x={x - 18} y={bottom + 12} width="10" height="10" fill={LEVEL[level]} />
            <UpText x={x + 8} y={bottom - 12}>{name}</UpText>
            <UpText x={x - 4} y={gy(-7)} end>{num}</UpText>
            {net && <UpText x={x - 7} y={gy(-2) - 13}>{net}</UpText>}
          </g>
        );
      })}
    </g>
  );
};

const Wiring = () => (
  <g fill="none" stroke={WIRE} strokeWidth="4" strokeLinecap="round" strokeLinejoin="round">
    {[1, 2, 3].map((n) => {
      const row = n - 15;
      return (
        <g key={n}>
          <path d={`M${gx(-24)} ${gy(row)}H${gx(-27)}L${gx(-28)} ${gy(row - 1)}`} />
          <text x={gx(-27) + 13} y={gy(row) - 6} fill="#000" stroke="none">{`PA${n}`}</text>
        </g>
      );
    })}
    {range(0, 7).map((n) => {
      const row = n - 13;
      return (
        <g key={n}>
          <path d={`M${gx(-7)} ${gy(row)}H${gx(-4)}L${gx(-3)} ${gy(row - 1)}`} />
          <text x={gx(-7) + 13} y={gy(row) - 7} fill="#000" stroke="none">{`PC${n}`}</text>
        </g>
      );
    })}
  </g>
);

const Schematic = () => (
  <Sheet role="img" aria-label="LCD1 U1">
    <g transform="translate(901 602)">
      <Grid />
      <path
        d={`M${gx(-28)} ${gy(-13)}V${gy(-18.5)}H${gx(-3)}V${gy(-1)}H${gx(15.5)}`}
        fill="none" stroke={BUS} strokeWidth="16" strokeLinecap="round" strokeLinejoin="round"
      />
      <Wiring />
      <Controller />
      <Display />
      <path d="M-13 0H15M1 -14V14M10 0A9 9 0 1 1 -8 0A9 9 0 1 1 10 0" fill="none" stroke={BUS} shapeRendering="crispEdges" />
    </g>
  </Sheet>
);

const Thumbnail = () => (
  <svg width="119" height="99" viewBox="0 0 119 99" shapeRendering="crispEdges" fill="none" stroke="#000" aria-hidden="true">
    <path d="M9.500 7.500H109.500V91.500H9.500Z" stroke="#0000d0" />
    <path d="M31.500 31V27.500H56.500V48.500H75M31 33.500H36M32 35.500H36" />
    <path d="M37.500 30.500H50.500V71.500H37.500Z" />
    <path d="M59.500 30.500H79.500V39.500H59.500ZM59.500 31.500H77.500V36.500H59.500Z" />
    <path d="M52 33.500H56M53 35.500H56M53 36.500H56M52 38.500H56M53 40.500H56M52 42.500H56" />
    <path d="M65.500 42V48M67.500 42V48M69.500 42V48M71.500 42V48M73.500 42V48M75.500 42V47" />
    <path d="M25.500 22.500H91.500V60.500H25.500Z" stroke="#00c800" />
  </svg>
);

/* ---------- application ---------- */

const menus = ["文件(F)", "编辑(E)", "视图(V)", "工具(T)", "设计(N)", "图表(G)", "调试(D)", "库(L)", "模版(M)", "系统(Y)", "帮助(H)"];

const toolbars: string[][] = [
  ["fresh", "open", "save", "exit", "|", "home", "schematic", "chip", "viewer", "gerber", "board", "bill", "source", "notes", "|", "help"],
  ["redraw", "dots", "|", "origin", "|", "pan", "zoomIn", "zoomOut", "zoomAll", "zoomArea"],
  ["undo", "redo", "|", "cut", "copy", "paste", "|", "blockCopy", "blockMove", "blockRotate", "blockDelete", "|", "pick", "makeDevice", "packaging", "decompose"],
  ["wireAuto", "|", "find", "assign", "|", "sheetNew", "sheetDrop", "sheetTree", "|", "erc"],
];

const modes = [
  "arrow", "component", "junction", "label", "script", "bus", "subcircuit", "|",
  "terminal", "devicePin", "graph", "popup", "generator", "probe", "meter", "|",
  "line", "box", "circle", "arc", "path", "text", "symbol", "marker",
];

const pressed = new Set(["dots", "wireAuto", "arrow"]);

const ToolSet = ({ items }: { items: string[] }) => (
  <Toolbar>
    <Grip />
    {items.map((name, i) =>
      name === "|" ? <Divider key={i} /> : (
        <ToolButton key={name} $on={pressed.has(name)} aria-label={name}><Icon>{pics[name]}</Icon></ToolButton>
      )
    )}
  </Toolbar>
);

const ModeButton = ({ name }: { name: string }) => (
  <PaletteButton $on={pressed.has(name)} aria-label={name}><Icon>{pics[name]}</Icon></PaletteButton>
);

export default function App() {
  return (
    <Window>
      <GlobalStyle />
      <Gradients />
      <TitleBar>
        <Icon size={20}>{pics.logo}</Icon>
        <Title>DL - Proteus 8 Professional - 原理图绘制</Title>
        <WindowButtons>
          <WindowButton aria-label="Minimize"><svg width="14" height="14" stroke="#000"><path d="M1 7.500H13" /></svg></WindowButton>
          <WindowButton aria-label="Restore">
            <svg width="14" height="14" fill="none" stroke="#000"><rect x="1.500" y="3.500" width="9" height="9" rx="2" /><path d="M4 1.500H10Q12.500 1.500 12.500 4V10" /></svg>
          </WindowButton>
          <WindowButton aria-label="Close"><svg width="14" height="14" stroke="#000"><path d="M1 1L13 13M13 1L1 13" /></svg></WindowButton>
        </WindowButtons>
      </TitleBar>
      <MenuBar>{menus.map((m) => <MenuItem key={m}>{m}</MenuItem>)}</MenuBar>

      <ToolbarRow>
        <ToolSet items={toolbars[0]} />
        <Toolbar>
          <Grip />
          <VariantBox>
            <VariantSelect aria-label="Design variant" defaultValue="Base Design"><option>Base Design</option></VariantSelect>
            <Chevron width="10" height="6" fill="none" stroke="#555"><path d="M1 1L5 5L9 1" /></Chevron>
          </VariantBox>
        </Toolbar>
        {toolbars.slice(1).map((items) => <ToolSet key={items[0]} items={items} />)}
      </ToolbarRow>

      <TabStrip>
        <Tab>
          <TabShape width="169" height="31"><path d="M0 26L25 .500H168.500V31H0Z" fill="url(#tabFill)" /><path d="M0 26L24 .500H168.500V31" fill="none" stroke="#6fa2bd" /></TabShape>
          <TabTitle><Icon size={20}>{pics.schematic}</Icon>原理图绘制</TabTitle>
          <TabClose aria-label="Close tab"><svg width="16" height="16" stroke="#666" strokeWidth="2"><path d="M2 2L14 14M14 2L2 14" /></svg></TabClose>
        </Tab>
        <TabRule />
      </TabStrip>
      <Band />

      <Workspace>
        <Palette>
          <PaletteGroup $gap={6}>
            <Grip $row />
            {modes.map((name, i) => (name === "|" ? <Divider key={i} $row /> : <ModeButton key={name} name={name} />))}
          </PaletteGroup>
          <PaletteGroup $gap={8}>
            <Grip $row />
            <ModeButton name="rotateCw" />
            <ModeButton name="rotateCcw" />
            <AngleInput aria-label="Angle" defaultValue="0°" />
            <Divider $row />
            <ModeButton name="flipX" />
            <ModeButton name="flipY" />
          </PaletteGroup>
        </Palette>
        <SidePanel>
          <Overview><Thumbnail /></Overview>
          <DeviceBox>
            <DeviceHeader>
              <PickButton>P</PickButton>
              <PickButton>L</PickButton>
              <DeviceTitle>DEVICES</DeviceTitle>
            </DeviceHeader>
            <DeviceList>
              <DeviceItem $on>LM016L</DeviceItem>
              <DeviceItem>STM32F103R6</DeviceItem>
            </DeviceList>
          </DeviceBox>
        </SidePanel>
        <SheetFrame><Schematic /></SheetFrame>
      </Workspace>

      <StatusBar>
        <StatusPart $basis={319}>
          <Grip />
          {["play", "step", "pause", "stop"].map((name) => (
            <RunButton key={name} aria-label={name}><Icon>{pics[name]}</Icon></RunButton>
          ))}
          <Divider />
          <Messages><Icon>{pics.info}</Icon>6 Message(s)</Messages>
        </StatusPart>
        <StatusPart $basis={412}>
          <Grip />
          <Progress>ANIMATING: 00:00:20.448424 (CPU load 62%)</Progress>
        </StatusPart>
        <StatusPart>
          <Grip />
          <Coordinate $gap={14}><span>x:</span><span>+1900.0</span></Coordinate>
          <Coordinate $gap={22}><span>y:</span><span>+300.0</span></Coordinate>
          <Credit>CSDN @wangz76 <CreditTail>th</CreditTail></Credit>
        </StatusPart>
      </StatusBar>
    </Window>
  );
}
